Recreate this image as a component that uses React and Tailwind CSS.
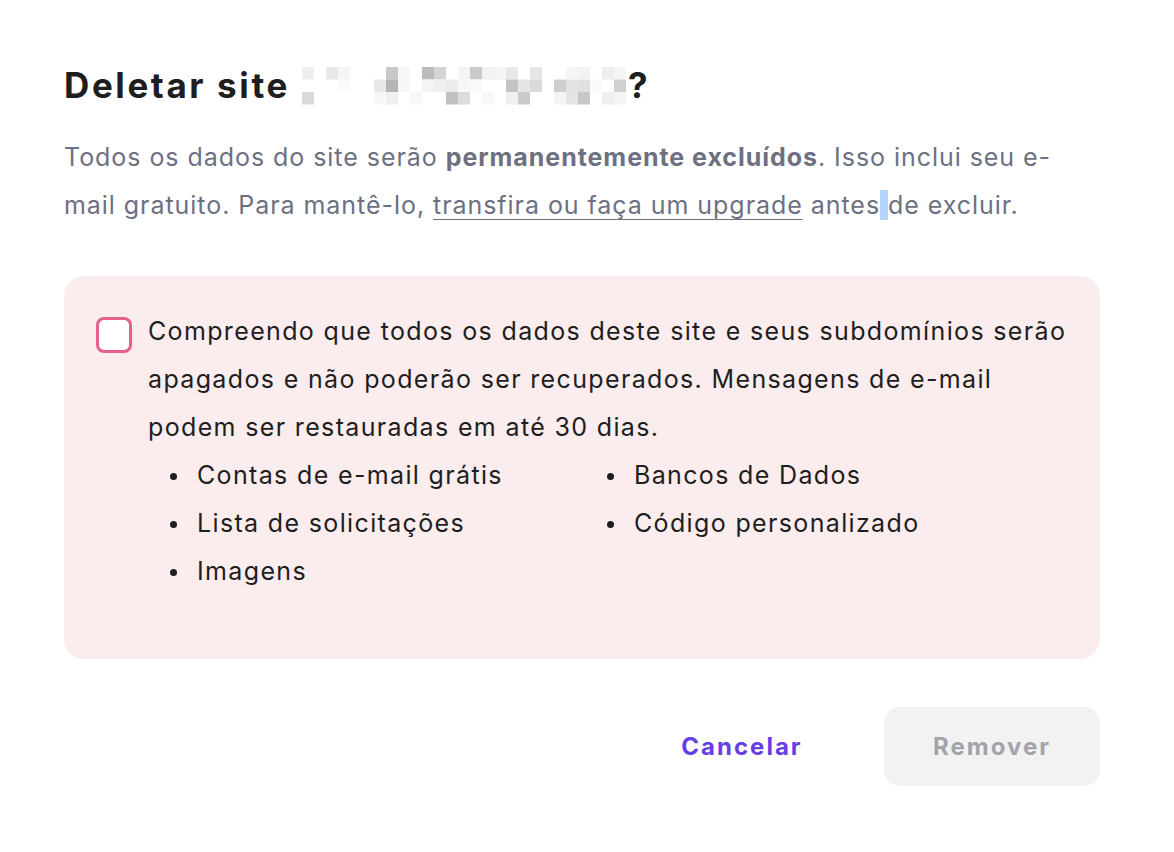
import React from 'react';

const blur = [
  ['#eeeeee', null, '#e8e8e8', '#f5f5f5', null, null, null, '#c8c8c8', '#f7f7f7', null, '#bbbbbb', '#d4d4d4', null, '#f4f4f4', '#c9c9c9', '#f2f2f2', '#f5f5f5', '#e8e8e8', null, '#e5e5e5', null, null, '#f5f5f5', '#f2f2f2', null, '#eeeeee', '#f5f5f5'],
  [null, null, null, '#fafafa', null, null, '#e8e8e8', '#b5b5b5', '#f7f7f7', null, '#f5f5f5', '#f0f0f0', '#ececec', '#f7f7f7', '#fafafa', null, null, '#c3c3c3', '#e5e5e5', '#d9d9d9', null, '#cfcfcf', '#e3e3e3', '#e0e0e0', '#fafafa', null, '#d0d0d0'],
  ['#dadada', null, null, null, null, null, '#f7f7f7', '#f0f0f0', null, '#f7f7f7', null, null, '#c0c0c0', '#dcdcdc', null, '#f7f7f7', null, '#f0f0f0', '#cacaca', null, null, '#f5f5f5', '#e5e5e5', '#c7c7c7', null, '#efefef', '#f5f5f5'],
];

function BlurredName() {
  return (
    <svg width="324" height="38" viewBox="0 0 324 38" className="inline-block ml-[12px] mr-[2px] mt-[2px]">
      {blur.map((row, r) =>
        row.map((c, i) =>
          c ? <rect key={r + '-' + i} x={i * 12} y={r * 12.5} width="12" height="12.5" fill={c} /> : null
        )
      )}
    </svg>
  );
}

const items = [
  'Contas de e-mail grátis',
  'Bancos de Dados',
  'Lista de solicitações',
  'Código personalizado',
  'Imagens',
];

export default function App() {
  return (
    <div className="min-h-[852px] bg-white pl-[64px] pr-[74px] pt-[60px] font-['Inter',sans-serif]">
      <h1 className="flex items-center h-[50px] text-[35px] font-bold tracking-[2.6px] text-[#1d1e20]">
        <span>Deletar site</span>
        <BlurredName />
        <span>?</span>
      </h1>

      <p className="mt-[23px] text-[25px] leading-[48px] text-[#6d7081] tracking-[0.95px]">
        Todos os dados do site serão <b className="font-bold">permanentemente excluídos</b>. Isso inclui seu e-
        <br />
        mail gratuito. Para mantê-lo, <a className="underline underline-offset-[5px] decoration-1">transfira ou faça um upgrade</a> antes<span className="bg-[#b3d4fc]"> </span>de excluir.
      </p>

      <div className="mt-[47px] rounded-[20px] bg-[#fbecee] pl-[32px] pr-[24px] pt-[31px] pb-[64px]">
        <div className="flex gap-[16px]">
          <div className="mt-[10px] w-[36px] h-[36px] shrink-0 rounded-[8px] border-[3px] border-[#e5608a] bg-white" />
          <div className="text-[25px] leading-[48px] text-[#1d1e20] tracking-[1.35px]">
            <p className="whitespace-nowrap">
              Compreendo que todos os dados deste site e seus subdomínios serão
              <br />
              apagados e não poderão ser recuperados. Mensagens de e-mail
              <br />
              podem ser restauradas em até 30 dias.
            </p>
            <ul className="ml-[22px] grid grid-cols-[437px_437px]">
              {items.map((t) => (
                <li key={t} className="flex items-center">
                  <span className="w-[7px] h-[7px] rounded-full bg-[#1d1e20] mr-[20px] mt-[3px]" />
                  {t}
                </li>
              ))}
            </ul>
          </div>
        </div>
      </div>

      <div className="mt-[48px] flex justify-end gap-[48px]">
        <button className="w-[188px] h-[79px] rounded-[16px] text-[24px] font-bold tracking-[2px] text-[#673de6]">
          Cancelar
        </button>
        <button className="w-[216px] h-[79px] rounded-[16px] bg-[#f2f2f2] text-[24px] font-bold tracking-[2px] text-[#a3a3aa]">
          Remover
        </button>
      </div>
    </div>
  );
}
